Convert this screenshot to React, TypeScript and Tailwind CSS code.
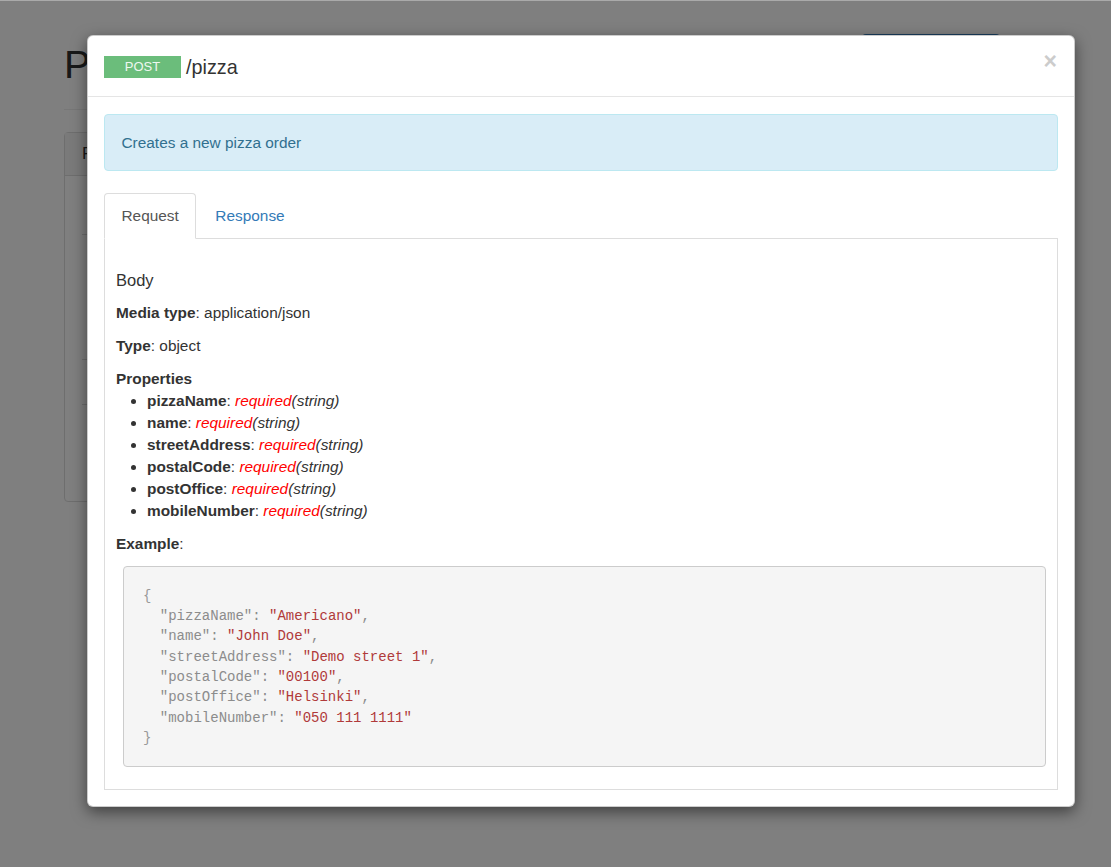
import React from "react";

const props = [
  "pizzaName",
  "name",
  "streetAddress",
  "postalCode",
  "postOffice",
  "mobileNumber",
];

const example: [string, string, boolean][] = [
  ["pizzaName", "Americano", true],
  ["name", "John Doe", true],
  ["streetAddress", "Demo street 1", true],
  ["postalCode", "00100", true],
  ["postOffice", "Helsinki", true],
  ["mobileNumber", "050 111 1111", false],
];

export default function App() {
  return (
    <div
      className="relative w-[1111px] h-[867px] overflow-hidden bg-white text-[#333]"
      style={{ fontFamily: '"Liberation Sans", Arial, sans-serif' }}
    >
      {/* background page */}
      <div className="px-[64px] pt-[40px]">
        <div className="relative">
          <h1 className="text-[39.6px] leading-[48px] text-[#333]">Pizza API</h1>
          <div className="absolute left-[798px] top-[-6px] w-[138px] h-[36px] rounded-[4px] bg-[#337ab7]" />
        </div>
        <div className="mt-[21px] border-t border-[#eee]" />
        <div className="mt-[22px] h-[370px] rounded-[4px] border border-[#ddd]">
          <div className="h-[43px] bg-[#f5f5f5] border-b border-[#ddd] px-[17px] flex items-center text-[17px]">
            Pizza
          </div>
          <div className="mx-[17px] mt-[58px] border-t border-[#ddd]" />
          <div className="mx-[17px] mt-[124px] border-t border-[#ddd]" />
          <div className="mx-[17px] mt-[44px] border-t border-[#ddd]" />
        </div>
      </div>

      {/* backdrop */}
      <div className="absolute inset-0 bg-black/50" />
      <div className="absolute left-0 right-0 top-0 h-px bg-[#aaa]" />

      {/* modal */}
      <div className="absolute left-[87px] top-[35px] w-[988px] rounded-[6px] border border-black/20 bg-white shadow-[0_5px_15px_rgba(0,0,0,0.5)]">
        <div className="flex items-start justify-between border-b border-[#e5e5e5] px-[16px] pt-[17.5px] pb-[15.5px]">
          <div className="flex h-[27px] items-center">
            <span className="flex h-[22px] w-[77px] items-center justify-center bg-[#6bbd7b] text-[13px] text-[#eef8f0]">
              POST
            </span>
            <span className="ml-[5px] text-[19.8px] leading-[27px] text-[#333]">/pizza</span>
          </div>
          <button className="mt-[-6px] mr-[1px] text-[23px] font-bold leading-[27px] text-[#cccccc]">
            ×
          </button>
        </div>

        <div className="px-[16px] pt-[17px] pb-[16px]">
          <div className="rounded-[4px] border border-[#bce8f1] bg-[#d9edf7] px-[16.5px] py-[16.5px] text-[15.4px] leading-[22px] text-[#31708f]">
            Creates a new pizza order
          </div>

          <div className="mt-[22px] flex border-b border-[#ddd] text-[15.4px] leading-[22px]">
            <div className="-mb-px h-[46px] rounded-t-[4px] border border-[#ddd] border-b-transparent bg-white px-[16.5px] py-[11px] text-[#555]">
              Request
            </div>
            <div className="ml-[2px] px-[17px] pt-[12px] pb-[10px] text-[#337ab7]">Response</div>
          </div>

          <div className="border-x border-b border-[#ddd] px-[11px] pt-[30px] pb-[22px] text-[15.4px] leading-[22px]">
            <div className="text-[16.5px] leading-[22px]">Body</div>
            <p className="mt-[11px]">
              <b>Media type</b>: application/json
            </p>
            <p className="mt-[11px]">
              <b>Type</b>: object
            </p>
            <p className="mt-[11px] font-bold">Properties</p>
            <ul className="list-disc pl-[31px]">
              {props.map((p) => (
                <li key={p}>
                  <b>{p}</b>: <i className="text-[#ff0000]">required</i>
                  <i>(string)</i>
                </li>
              ))}
            </ul>
            <p className="mt-[11px]">
              <b>Example</b>:
            </p>
            <pre
              className="ml-[7px] mt-[11px] rounded-[4px] border border-[#ccc] bg-[#f5f5f5] px-[19px] pt-[18.5px] pb-[17.5px] text-[14px] leading-[20.35px] text-[#8c8c8c]"
              style={{ fontFamily: '"Liberation Mono", "Courier New", monospace' }}
            >
              <div className="text-[#999]">{"{"}</div>
              {example.map(([k, v, comma]) => (
                <div key={k}>
                  {"  "}
                  <span>"{k}"</span>
                  <span>: </span>
                  <span className="text-[#b03a3a]">"{v}"</span>
                  {comma ? <span>,</span> : null}
                </div>
              ))}
              <div className="text-[#999]">{"}"}</div>
            </pre>
          </div>
        </div>
      </div>
    </div>
  );
}
